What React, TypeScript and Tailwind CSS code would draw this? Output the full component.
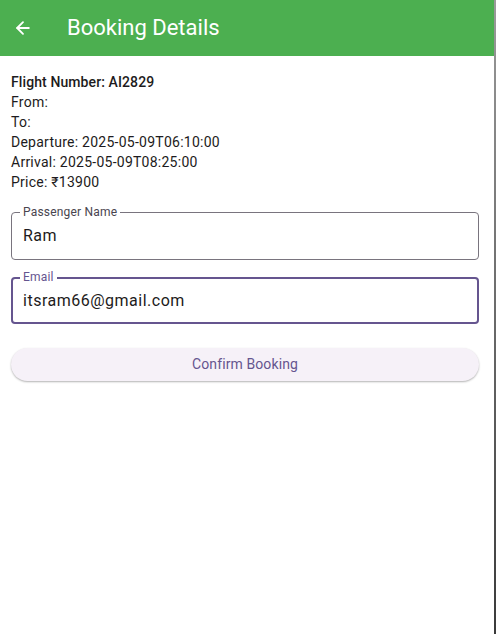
import { ArrowLeft } from "lucide-react";

export default function App() {
  return (
    <div className="flex h-[634px] w-[496px] bg-white font-['Roboto',sans-serif]">
      <div className="flex w-[494px] flex-col">
        {/* App bar */}
        <div className="flex h-[56px] items-center bg-[#4caf50] text-white">
          <ArrowLeft className="ml-[13px]" size={20} strokeWidth={2.2} />
          <h1 className="ml-[34px] text-[22px] leading-none">Booking Details</h1>
        </div>

        <div className="flex flex-col px-[11px] pt-[16px]">
          {/* Flight info */}
          <div className="text-[14px] leading-[20px] tracking-[0.25px] text-[#1d1b20]">
            <p className="font-medium tracking-[0.1px]">Flight Number: AI2829</p>
            <p>From:</p>
            <p>To:</p>
            <p>Departure: 2025-05-09T06:10:00</p>
            <p>Arrival: 2025-05-09T08:25:00</p>
            <p>Price: ₹13900</p>
          </div>

          {/* Passenger name */}
          <div className="relative mt-[20px] w-[468px]">
            <span className="absolute -top-[8px] left-[9px] bg-white px-[3px] text-[12px] leading-[16px] tracking-[0.2px] text-[#49454f]">
              Passenger Name
            </span>
            <div className="flex h-[48px] items-center rounded-[4px] border border-[#79747e] px-[11px] text-[16px] tracking-[0.5px] text-[#1d1b20]">
              Ram
            </div>
          </div>

          {/* Email */}
          <div className="relative mt-[17px] w-[468px]">
            <span className="absolute -top-[8px] left-[9px] bg-white px-[3px] text-[12px] leading-[16px] tracking-[0.2px] text-[#65558f]">
              Email
            </span>
            <div className="flex h-[47px] items-center rounded-[4px] border-2 border-[#65558f] px-[10px] text-[16px] tracking-[0.5px] text-[#1d1b20]">
              itsram66@gmail.com
            </div>
          </div>

          <button className="mt-[24px] h-[33px] w-[468px] rounded-full bg-[#f6f1f8] text-[14px] font-normal tracking-[0.1px] text-[#65558f] shadow-[0_1px_2px_rgba(0,0,0,0.3)]">
            Confirm Booking
          </button>
        </div>
      </div>
      <div className="w-[2px] bg-[linear-gradient(#9a9a9a,#3a3a3a)]" />
    </div>
  );
}
